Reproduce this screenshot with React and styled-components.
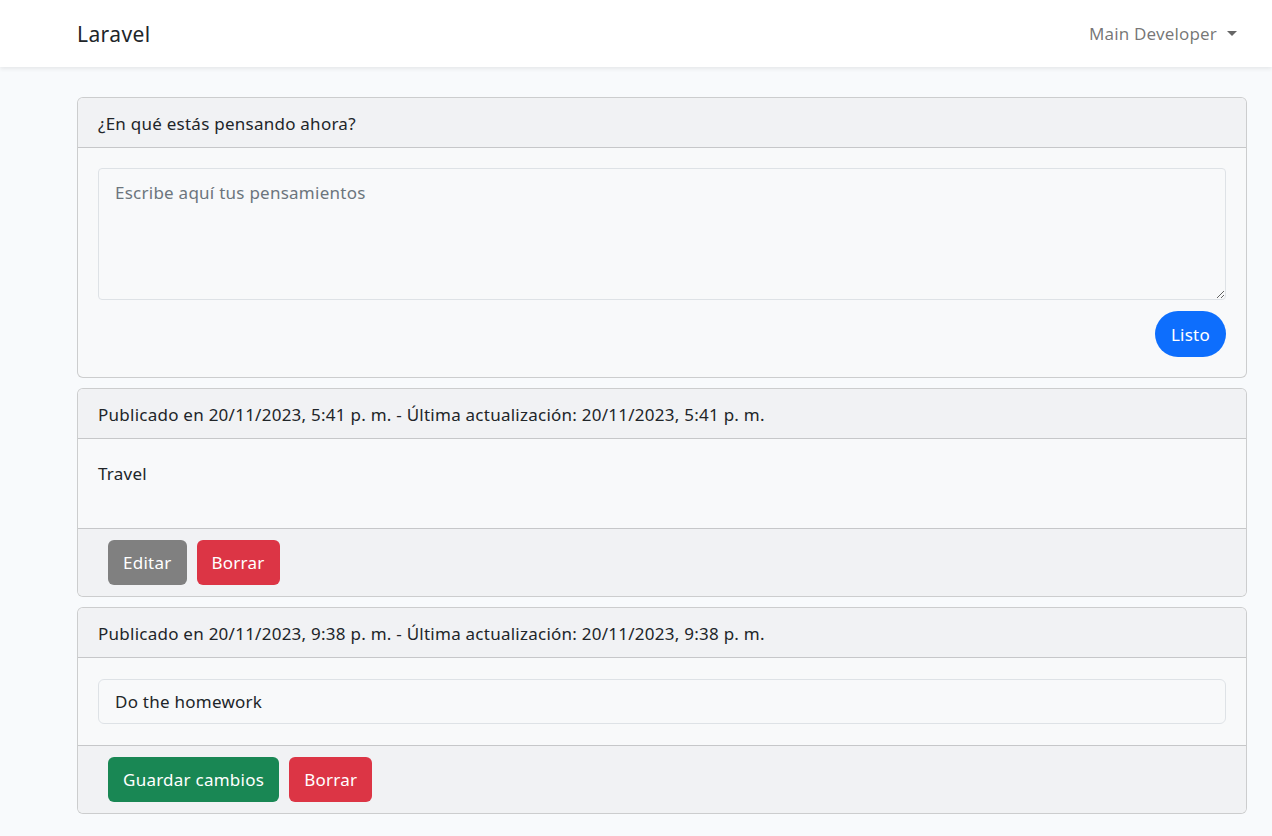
import React from "react";
import styled, { createGlobalStyle } from "styled-components";

const Global = createGlobalStyle`
  html, body { margin: 0; padding: 0; }
  body {
    background: #f8fafc;
    font-family: "Noto Sans", "Open Sans", sans-serif;
    font-size: 17px;
    letter-spacing: 0.25px;
    color: #212529;
  }
  * { box-sizing: border-box; }
`;

const Navbar = styled.nav`
  height: 67px;
  background: #fff;
  box-shadow: 0 2px 4px rgba(0, 0, 0, 0.075);
  display: flex;
  align-items: center;
  padding: 0 35px 0 77px;
  justify-content: space-between;
`;

const Brand = styled.a`
  font-size: 21px;
  letter-spacing: 0.4px;
  color: #212529;
  text-decoration: none;
`;

const UserMenu = styled.div`
  display: flex;
  align-items: center;
  gap: 6px;
  color: rgba(0, 0, 0, 0.55);
  font-size: 17px;
  letter-spacing: 0.15px;
`;

const Caret = styled.span`
  width: 0;
  height: 0;
  border-left: 5px solid transparent;
  border-right: 5px solid transparent;
  border-top: 5px solid rgba(0, 0, 0, 0.6);
  margin-left: 4px;
`;

const Main = styled.main`
  padding: 30px 0 20px 77px;
  width: 1247px;
  display: flex;
  flex-direction: column;
  gap: 10px;
`;

const Card = styled.section`
  border: 1px solid rgba(0, 0, 0, 0.175);
  border-radius: 6px;
  overflow: hidden;
  background: #f8f9fa;
`;

const CardHeader = styled.header`
  height: 50px;
  display: flex;
  align-items: center;
  padding: 1px 20px 0;
  background: #f1f2f4;
  border-bottom: 1px solid rgba(0, 0, 0, 0.175);
`;

const CardBody = styled.div`
  padding: ${(p) => (p.$compact ? "21px 20px" : "20px")};
  display: flex;
  flex-direction: column;
`;

const CardFooter = styled.footer`
  padding: 11px 20px 11px 30px;
  background: #f1f2f4;
  border-top: 1px solid rgba(0, 0, 0, 0.175);
  display: flex;
  gap: 10px;
`;

const TextArea = styled.textarea`
  height: 132px;
  width: 100%;
  padding: 12px 16px;
  border: 1px solid #dee2e6;
  border-radius: 4px;
  background: #f8f9fa;
  font: inherit;
  letter-spacing: inherit;
  color: #212529;
  resize: vertical;
  &::placeholder { color: #6c757d; }
`;

const Input = styled.input`
  height: 45px;
  width: 100%;
  padding: 0 16px;
  border: 1px solid #dee2e6;
  border-radius: 6px;
  background: #f8f9fa;
  font: inherit;
  letter-spacing: inherit;
  color: #212529;
`;

const Paragraph = styled.p`
  margin: 2px 0 21px;
  line-height: 26px;
`;

const Actions = styled.div`
  display: flex;
  justify-content: flex-end;
  margin-top: 11px;
`;

const colors = {
  primary: "#0d6efd",
  secondary: "#808080",
  danger: "#dc3545",
  success: "#198754",
};

const Button = styled.button`
  height: ${(p) => (p.$pill ? 46 : 45)}px;
  padding: 0 ${(p) => (p.$pill ? 16 : 15)}px;
  border: none;
  border-radius: ${(p) => (p.$pill ? "23px" : "6px")};
  background: ${(p) => colors[p.$variant]};
  color: #fff;
  font: inherit;
  letter-spacing: inherit;
  cursor: pointer;
`;

export default function App() {
  return (
    <>
      <Global />
      <Navbar>
        <Brand href="#">Laravel</Brand>
        <UserMenu>
          Main Developer
          <Caret />
        </UserMenu>
      </Navbar>
      <Main>
        <Card>
          <CardHeader>¿En qué estás pensando ahora?</CardHeader>
          <CardBody>
            <TextArea placeholder="Escribe aquí tus pensamientos" />
            <Actions>
              <Button $variant="primary" $pill>Listo</Button>
            </Actions>
          </CardBody>
        </Card>
        <Card>
          <CardHeader>
            Publicado en 20/11/2023, 5:41 p. m. - Última actualización: 20/11/2023, 5:41 p. m.
          </CardHeader>
          <CardBody>
            <Paragraph>Travel</Paragraph>
          </CardBody>
          <CardFooter>
            <Button $variant="secondary">Editar</Button>
            <Button $variant="danger">Borrar</Button>
          </CardFooter>
        </Card>
        <Card>
          <CardHeader>
            Publicado en 20/11/2023, 9:38 p. m. - Última actualización: 20/11/2023, 9:38 p. m.
          </CardHeader>
          <CardBody $compact>
            <Input defaultValue="Do the homework" />
          </CardBody>
          <CardFooter>
            <Button $variant="success">Guardar cambios</Button>
            <Button $variant="danger">Borrar</Button>
          </CardFooter>
        </Card>
      </Main>
    </>
  );
}
